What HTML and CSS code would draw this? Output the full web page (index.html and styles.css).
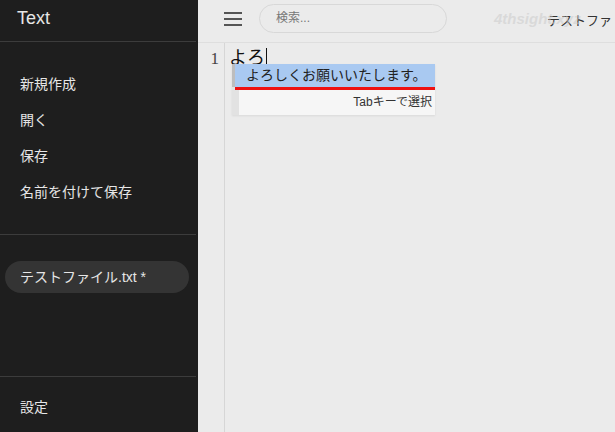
FILE: index.html
```html
<!DOCTYPE html>
<html lang="ja">
<head>
  <meta charset="UTF-8" />
  <title>Text</title>
  <link rel="stylesheet" href="styles.css">
</head>
<body>
  <div class="app">
    <aside class="sidebar">
      <div class="side-title">Text</div>
      <ul class="menu">
        <li>新規作成</li>
        <li>開く</li>
        <li>保存</li>
        <li>名前を付けて保存</li>
      </ul>
      <div class="files">
        <div class="file-pill">テストファイル.txt *</div>
      </div>
      <div class="settings">設定</div>
    </aside>

    <main class="main">
      <header class="topbar">
        <div class="hamburger"><span></span><span></span><span></span></div>
        <div class="search">検索...</div>
        <div class="doc-title">テストファ</div>
        <div class="watermark">4thsight.xyz</div>
      </header>
      <div class="editor">
        <div class="gutter">1</div>
        <div class="code">
          <div class="line">よろ<span class="cursor"></span></div>
          <div class="popup">
            <div class="popup-bar"></div>
            <div class="popup-body">
              <div class="suggest">よろしくお願いいたします。</div>
              <div class="hint">Tabキーで選択</div>
            </div>
          </div>
        </div>
      </div>
    </main>
  </div>
</body>
</html>
```

FILE: styles.css
```css
* {
  box-sizing: border-box;
}
body {
  margin: 0;
  font-family: "Liberation Sans", "Noto Sans CJK JP", sans-serif;
  overflow: hidden;
}
.app {
  display: flex;
  width: 615px;
  height: 432px;
}
.sidebar {
  width: 198px;
  flex-shrink: 0;
  background: #1e1e1e;
  color: #e6e6e6;
  display: flex;
  flex-direction: column;
}
.side-title {
  height: 42px;
  padding: 8px 0 0 17px;
  font-size: 18px;
  border-bottom: 1px solid #3c3c3c;
  margin-right: 2px;
}
.menu {
  list-style: none;
  margin: 0 2px 0 0;
  padding: 32px 0 0 20px;
  height: 193px;
  font-size: 14px;
  border-bottom: 1px solid #3c3c3c;
}
.menu li {
  height: 36px;
  line-height: 20px;
}
.files {
  height: 142px;
  padding: 26px 0 0 5px;
  border-bottom: 1px solid #3c3c3c;
  margin-right: 2px;
}
.file-pill {
  width: 184px;
  height: 32px;
  border-radius: 16px;
  background: #343434;
  font-size: 14px;
  line-height: 32px;
  padding-left: 15px;
}
.settings {
  padding: 19px 0 0 20px;
  font-size: 14px;
}
.main {
  flex: 1;
  min-width: 0;
  background: #ebebeb;
  display: flex;
  flex-direction: column;
  position: relative;
}
.topbar {
  height: 43px;
  border-bottom: 1px solid #dedede;
  display: flex;
  align-items: center;
  padding-left: 26px;
  white-space: nowrap;
  overflow: hidden;
  position: relative;
}
.hamburger {
  width: 18px;
  display: flex;
  flex-direction: column;
  gap: 4px;
  margin-right: 17px;
  margin-top: -4px;
}
.hamburger span {
  height: 2px;
  background: #555;
}
.search {
  width: 188px;
  height: 29px;
  border: 1px solid #d8d8d8;
  border-radius: 15px;
  font-size: 12px;
  color: #777;
  line-height: 27px;
  padding-left: 16px;
  margin-top: -5px;
}
.doc-title {
  margin-left: 100px;
  font-size: 13px;
  color: #333;
  margin-top: -4px;
}
.watermark {
  position: absolute;
  left: 296px;
  top: 10px;
  font-size: 15px;
  font-weight: bold;
  font-style: italic;
  color: rgba(200, 200, 200, 0.5);
}
.editor {
  flex: 1;
  display: flex;
}
.gutter {
  width: 27px;
  border-right: 1px solid #d6d6d6;
  text-align: right;
  padding: 6px 5px 0 0;
  font-size: 17px;
  font-family: "Liberation Serif", serif;
  color: #444;
}
.code {
  position: relative;
  flex: 1;
}
.line {
  padding: 4px 0 0 4px;
  font-size: 18px;
  line-height: 22px;
  color: #111;
  display: flex;
  align-items: center;
}
.cursor {
  display: inline-block;
  width: 1px;
  height: 20px;
  background: #111;
  margin-left: 1px;
}
.popup {
  position: absolute;
  left: 7px;
  top: 21px;
  width: 203px;
  height: 51px;
  display: flex;
  background: #f6f6f6;
  box-shadow: 0 1px 2px rgba(0, 0, 0, 0.08);
}
.popup-bar {
  width: 7px;
  background: linear-gradient(#bdbdbd 0 23px, #e2e2e2 23px);
}
.popup-body {
  flex: 1;
}
.suggest {
  height: 26px;
  background: #a9c9f1;
  border-bottom: 3px solid #ee1111;
  margin-left: -4px;
  padding-left: 11px;
  font-size: 14px;
  line-height: 23px;
  color: #222;
}
.hint {
  text-align: right;
  font-size: 12px;
  color: #333;
  padding: 2px 3px 0 0;
}
```
